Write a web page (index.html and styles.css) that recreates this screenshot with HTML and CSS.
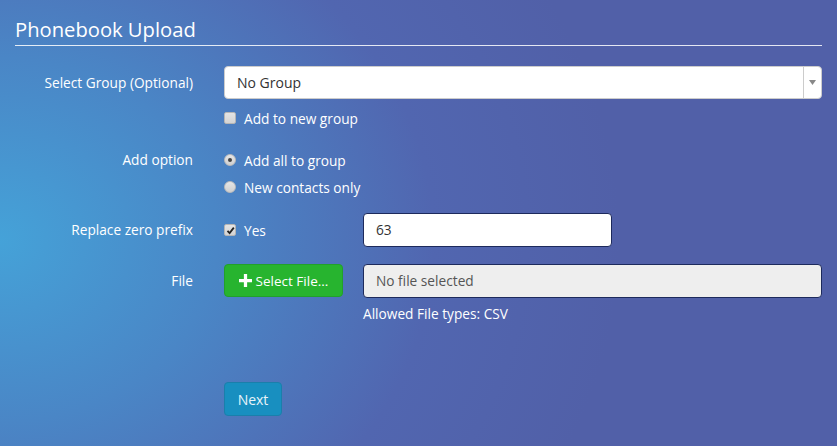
FILE: index.html
```html
<!DOCTYPE html>
<html>
<head>
<meta charset="utf-8">
<link rel="stylesheet" href="styles.css">
</head>
<body>
<div class="page">
  <h1 class="title">Phonebook Upload</h1>
  <div class="form">
    <div class="row row-group">
      <div class="label">Select Group (Optional)</div>
      <div class="control">
        <div class="select">
          <span class="select-text">No Group</span>
          <span class="select-arrow"><svg width="7" height="5" viewBox="0 0 7 5"><path d="M0 0H7L3.5 5Z" fill="#888"/></svg></span>
        </div>
        <div class="check-line sub">
          <span class="box"></span><span class="opt-text">Add to new group</span>
        </div>
      </div>
    </div>
    <div class="row row-option">
      <div class="label">Add option</div>
      <div class="control">
        <div class="check-line">
          <span class="radio on"></span><span class="opt-text">Add all to group</span>
        </div>
        <div class="check-line second">
          <span class="radio"></span><span class="opt-text">New contacts only</span>
        </div>
      </div>
    </div>
    <div class="row row-prefix">
      <div class="label">Replace zero prefix</div>
      <div class="control inline">
        <div class="check-line yes">
          <span class="box on"><svg width="9" height="9" viewBox="0 0 9 9"><path d="M1.5 4.8L3.6 7L7.8 1.6" fill="none" stroke="#222" stroke-width="1.8"/></svg></span><span class="opt-text">Yes</span>
        </div>
        <div class="input prefix">63</div>
      </div>
    </div>
    <div class="row row-file">
      <div class="label">File</div>
      <div class="control inline">
        <div class="btn-green"><svg width="13" height="13" viewBox="0 0 12 12"><path d="M4.5 0H7.5V4.5H12V7.5H7.5V12H4.5V7.5H0V4.5H4.5Z" fill="#fff"/></svg><span>Select File...</span></div>
        <div class="file-col">
          <div class="input file">No file selected</div>
          <div class="hint">Allowed File types: CSV</div>
        </div>
      </div>
    </div>
    <div class="row row-next">
      <div class="label"></div>
      <div class="control">
        <div class="btn-next">Next</div>
      </div>
    </div>
  </div>
</div>
</body>
</html>
```

FILE: styles.css
```css
html, body {
  margin: 0;
  padding: 0;
  height: 100%;
}
body {
  background: radial-gradient(ellipse 620px 520px at 0px 240px, #45a2d8 0%, #4a86c6 35%, #5166b0 70%, #5160a8 100%);
  background-color: #5160a8;
  font-family: "Open Sans", "Lato", sans-serif;
  color: #fff;
  font-size: 13.7px;
  overflow: hidden;
}
.page {
  padding: 0 15px;
}
.title {
  margin: 0;
  padding-top: 16px;
  height: 29px;
  font-size: 20.2px;
  font-weight: 400;
  line-height: 27px;
  border-bottom: 1px solid rgba(255,255,255,0.85);
}
.form {
  padding-top: 20px;
}
.row {
  display: flex;
}
.label {
  width: 178px;
  flex: none;
  text-align: right;
  padding-right: 31px;
  line-height: 33px;
}
.control {
  flex: 1;
  min-width: 0;
}
.control.inline {
  display: flex;
  align-items: flex-start;
}
.select {
  height: 31px;
  background: #fff;
  border: 1px solid #ccc;
  border-radius: 4px;
  display: flex;
  align-items: center;
  color: #333;
  font-size: 14px;
}
.select-text {
  flex: 1;
  padding-left: 12px;
}
.select-arrow {
  width: 17px;
  align-self: stretch;
  border-left: 1px solid #ccc;
  display: flex;
  align-items: center;
  justify-content: center;
}
.check-line {
  display: flex;
  align-items: center;
  height: 20px;
}
.check-line.sub {
  margin-top: 9px;
}
.opt-text {
  margin-left: 8px;
}
.box {
  width: 10px;
  height: 10px;
  background: linear-gradient(#e4e4e4, #d4d4d4);
  border: 1px solid #b5b5b5;
  border-radius: 2px;
  display: flex;
  align-items: center;
  justify-content: center;
}
.radio {
  width: 10px;
  height: 10px;
  border-radius: 50%;
  background: linear-gradient(#e6e6e6, #d0d0d0);
  border: 1px solid #bbb;
  display: flex;
  align-items: center;
  justify-content: center;
}
.radio.on::after {
  content: "";
  width: 4px;
  height: 4px;
  border-radius: 50%;
  background: #444;
}
.row-option {
  margin-top: 22px;
}
.row-option .label {
  line-height: 20px;
}
.check-line.second {
  margin-top: 7px;
}
.row-prefix {
  margin-top: 16px;
}
.row-prefix .label {
  line-height: 34px;
}
.check-line.yes {
  width: 139px;
  height: 34px;
}
.input {
  box-sizing: border-box;
  height: 34px;
  border: 1px solid #1d2a5c;
  border-radius: 4px;
  padding-left: 12px;
  line-height: 32px;
  color: #333;
  background: #fff;
}
.input.prefix {
  width: 249px;
}
.row-file {
  margin-top: 17px;
}
.row-file .label {
  line-height: 34px;
}
.btn-green {
  box-sizing: border-box;
  width: 119px;
  height: 33px;
  background: #27b42f;
  border: 1px solid #22a02a;
  border-radius: 4px;
  display: flex;
  align-items: center;
  justify-content: center;
  gap: 4px;
  color: #fff;
  font-size: 13.5px;
}
.file-col {
  margin-left: 20px;
  flex: 1;
}
.input.file {
  background: #eee;
  color: #555;
}
.hint {
  margin-top: 7px;
  line-height: 18px;
}
.row-next {
  margin-top: 59px;
}
.btn-next {
  box-sizing: border-box;
  width: 58px;
  height: 34px;
  background: #188fc0;
  border: 1px solid #1a7fab;
  border-radius: 4px;
  color: #e8f4fa;
  font-size: 14px;
  display: flex;
  align-items: center;
  justify-content: center;
}
```
